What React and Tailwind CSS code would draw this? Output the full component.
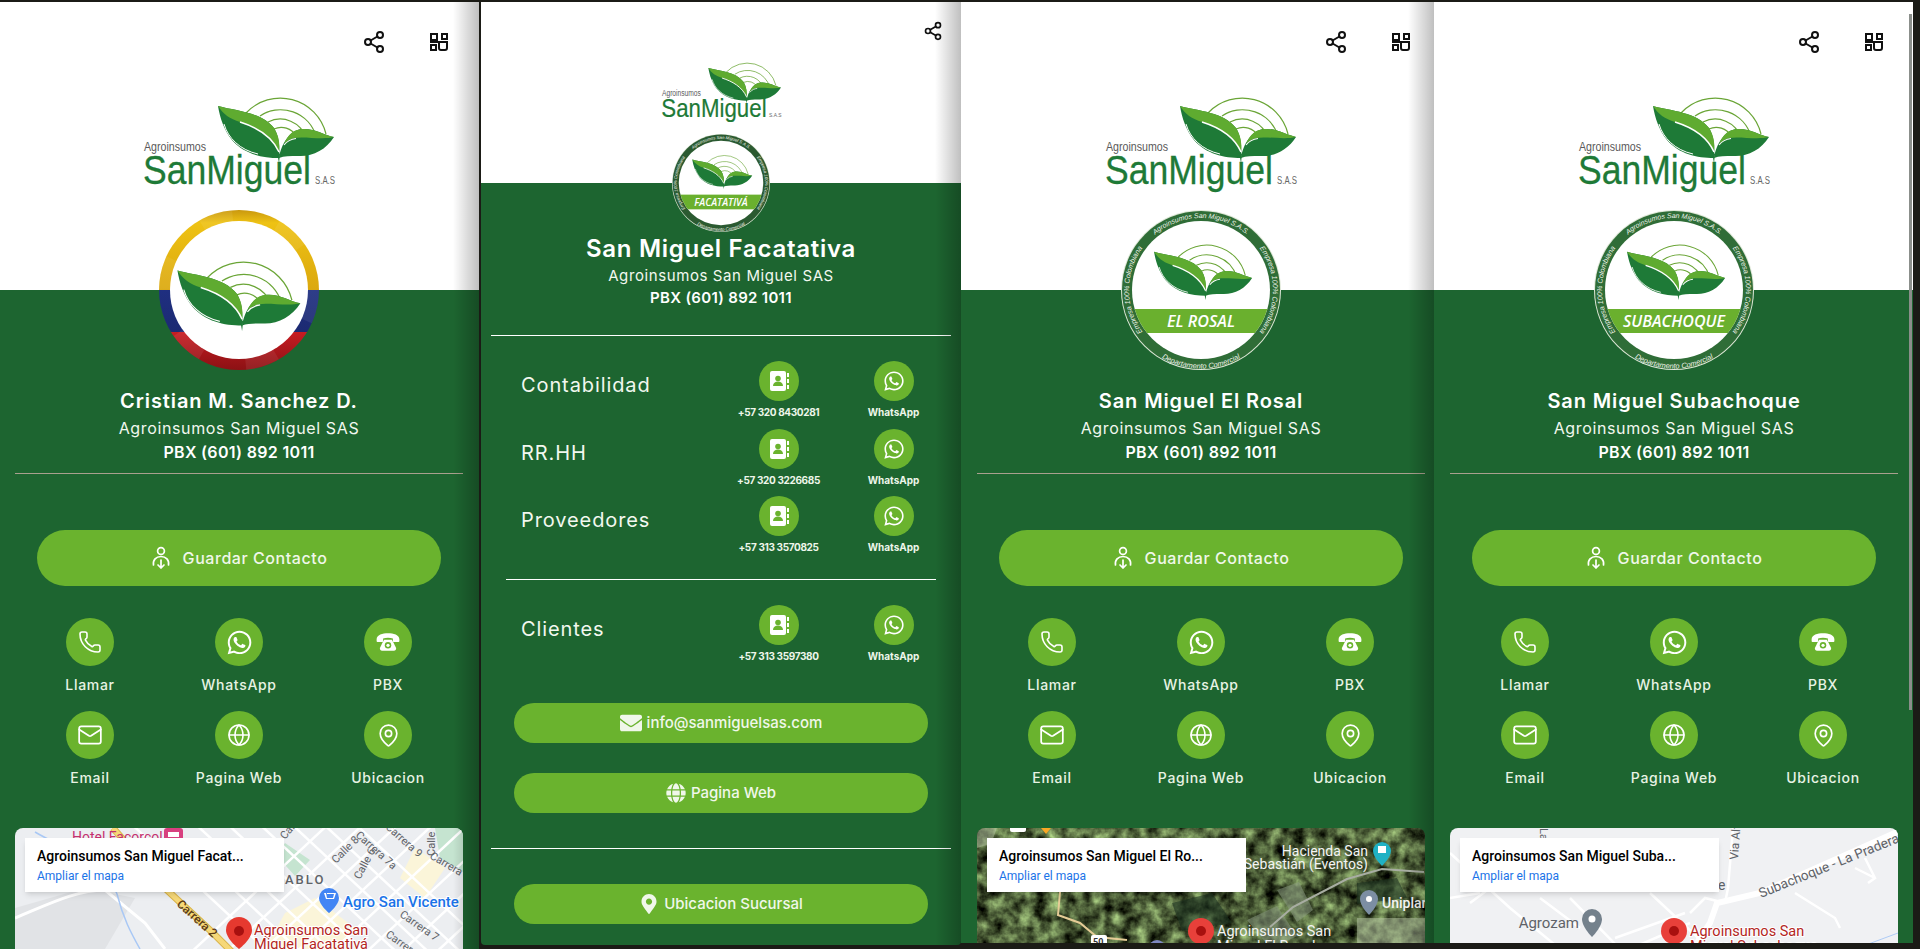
import React from 'react';
import { Share2, Phone, Mail, Globe, MapPin } from 'lucide-react';
import { FaWhatsapp, FaEnvelope, FaGlobe, FaMapMarkerAlt } from 'react-icons/fa';

const QrIcon = () => (
  <svg width="18" height="18" viewBox="0 0 18 18" fill="none" stroke="#111" strokeWidth="2">
    <rect x="1" y="1" width="6" height="6" />
    <rect x="12" y="1" width="5" height="5" />
    <rect x="1" y="12" width="5" height="5" />
    <path d="M0 9h17v6a2 2 0 0 1-2 2h-4a2 2 0 0 1-2-2V9" />
  </svg>
);

const RetroPhone = () => (
  <svg width="26" height="26" viewBox="0 0 24 24">
    <path fill="#fff" d="M1.5 9.5C1.500 5.500 7 4 12 4s10.500 1.500 10.500 5.500v1.500c0 .6-.5 1-1 1h-4c-.6 0-1-.4-1-1V8.700c-2.500-.7-6.500-.7-9 0V11c0 .6-.4 1-1 1h-4c-.5 0-1-.4-1-1z" />
    <path fill="#fff" d="M8.500 10h7l1.500 2.500 2.500 5c.2 1.500-.8 2.500-2 2.500h-11c-1.200 0-2.200-1-2-2.500l2.500-5z" />
    <circle cx="12" cy="15" r="3" fill="#6ab32e" />
    <circle cx="12" cy="15" r="1.500" fill="#fff" />
  </svg>
);

const SaveContactIcon = () => (
  <svg width="20" height="24" viewBox="0 0 20 24" fill="none" stroke="#fff" strokeWidth="1.7" strokeLinecap="round" strokeLinejoin="round">
    <circle cx="10" cy="5" r="3.400" />
    <path d="M2.500 19c-.8-5 2.500-8.500 7.500-8.500s8.300 3.500 7.500 8.500" />
    <path d="M10 14v8M7 19l3 3 3-3" />
  </svg>
);

const ContactBook = () => (
  <svg width="24" height="24" viewBox="0 0 24 24">
    <rect x="3" y="2" width="16" height="20" rx="2" fill="#fff" />
    <circle cx="11" cy="9.500" r="2.800" fill="#6ab32e" />
    <path fill="#6ab32e" d="M6 17c0-3 2.200-4.500 5-4.500s5 1.500 5 4.500z" />
    <path fill="#fff" d="M20 4h2v4h-2zM20 10h2v4h-2zM20 16h2v4h-2z" />
  </svg>
);

// leaf mark in logo coordinates, arcs included
const LeafMark = ({ transform }) => (
  <g transform={transform}>
    <g fill="none" stroke="#6aa536" strokeWidth="1.200">
      <path d="M102 15A47 47 0 0 1 182 36" />
      <path d="M116 18A37 37 0 0 1 172 38" />
      <path d="M124 24A27 27 0 0 1 162 40" />
      <path d="M130 31A17 17 0 0 1 152 38" />
    </g>
    <path fill="#1e7a37" d="M74 8C92 13 118 14 130 30 135 38 136 48 135 60 118 60 100 56 88 42 80 32 76 20 74 8Z" />
    <path fill="#5fab30" d="M74 8C92 13 118 14 130 30 135 38 136 46 135 54 128 38 112 29 96 24 86 21 79 16 74 8Z" />
    <path fill="none" stroke="#fff" strokeWidth="1.500" d="M96 24C112 29 128 38 135 54" />
    <path fill="none" stroke="#fff" strokeWidth="1" d="M80 26C84 40 96 52 114 56" />
    <path fill="#1e7a37" d="M135 60C137 46 146 32 158 31 170 30 180 37 190 39 182 52 168 59 154 58 146 58 140 58 135 60Z" />
    <path fill="#5fab30" d="M140 46C144 36 150 31.500 158 31 170 30 180 37 190 39 178 42 160 38 150 40 146 41 143 43 140 46Z" />
    <path fill="none" stroke="#fff" strokeWidth="1.200" d="M140 47C144 42 148 41 152 40.500" />
    <path fill="#1e7a37" d="M133 54l3 2-1 9z" />
  </g>
);

const Logo = ({ className }) => (
  <svg className={`overflow-visible ${className}`} viewBox="0 0 190 94">
    <LeafMark />
    <text x="0" y="53" fontFamily="Liberation Sans, sans-serif" fontSize="13" fill="#5a5a5a" textLength="62" lengthAdjust="spacingAndGlyphs">Agroinsumos</text>
    <text x="-1" y="86" fontFamily="Liberation Sans, sans-serif" fontSize="40" fill="#1e7a37" stroke="#1e7a37" strokeWidth=".3" textLength="168" lengthAdjust="spacingAndGlyphs">SanMiguel</text>
    <text x="171" y="86" fontFamily="Liberation Sans, sans-serif" fontSize="10" fill="#666" textLength="20" lengthAdjust="spacingAndGlyphs">S.A.S</text>
  </svg>
);

const BranchSeal = ({ id, label, labelWidth, ringColor = '#2f6d37', className }) => (
  <svg className={className} viewBox="0 0 160 160">
    <defs>
      <path id={`${id}-top`} d="M8 80A72 72 0 0 1 152 80" />
      <path id={`${id}-bot`} d="M1.500 80A78.500 78.500 0 0 0 158.500 80" />
      <clipPath id={`${id}-in`}><circle cx="80" cy="80" r="69" /></clipPath>
    </defs>
    <circle cx="80" cy="80" r="80" fill="#dfe8d8" />
    <circle cx="80" cy="80" r="79" fill={ringColor} />
    <circle cx="80" cy="80" r="69" fill="#fff" />
    <g fontFamily="Liberation Sans, sans-serif" fontStyle="italic" fill="#eef3e8">
      <text textAnchor="middle" fontSize="7"><textPath href={`#${id}-top`} startOffset="50%">Agroinsumos San Miguel S.A.S.</textPath></text>
      <g fontSize="7.200">
        <g transform="rotate(-90 80 80)"><text textAnchor="middle"><textPath href={`#${id}-top`} startOffset="50%">Empresa 100% Colombiana</textPath></text></g>
        <g transform="rotate(90 80 80)"><text textAnchor="middle"><textPath href={`#${id}-top`} startOffset="50%">Empresa 100% Colombiana</textPath></text></g>
      </g>
      <text textAnchor="middle" fontSize="7.400"><textPath href={`#${id}-bot`} startOffset="50%">Departamento Comercial</textPath></text>
    </g>
    <LeafMark transform="translate(-29.500 35) scale(.845)" />
    <rect x="0" y="99" width="160" height="24" fill="#6ab02e" clipPath={`url(#${id}-in)`} />
    <text x={80 - labelWidth / 2} y="117" fontFamily="Open Sans, sans-serif" fontStyle="italic" fontWeight="600" fontSize="17" fill="#fff" textLength={labelWidth} lengthAdjust="spacingAndGlyphs">{label}</text>
  </svg>
);

const FlagSeal = ({ className }) => (
  <svg className={className} viewBox="0 0 160 160">
    <defs>
      <linearGradient id="flag" x1="0" y1="0" x2="0" y2="1">
        <stop offset="0" stopColor="#c9980f" />
        <stop offset=".08" stopColor="#eec214" />
        <stop offset=".5" stopColor="#dba80e" />
        <stop offset=".5" stopColor="#1f2f80" />
        <stop offset=".76" stopColor="#1c2a72" />
        <stop offset=".76" stopColor="#c81c22" />
        <stop offset="1" stopColor="#8c1114" />
      </linearGradient>
    </defs>
    <circle cx="80" cy="80" r="80" fill="url(#flag)" />
    <circle cx="80" cy="80" r="74.500" fill="none" stroke="#fff" strokeOpacity=".07" strokeWidth="11" strokeDasharray="32 46" />
    <circle cx="80" cy="80" r="69" fill="#fff" />
    <LeafMark transform="translate(-60 52) scale(1.060)" />
  </svg>
);

const RedPin = ({ big }) => (
  <g>
    {big ? <path fill="#e6392f" d="M224 89a13 13 0 0 1 13 13c0 9-13 19-13 19s-13-10-13-19a13 13 0 0 1 13-13z" /> : <circle cx="224" cy="103" r="13" fill="#e8403a" />}
    <circle cx="224" cy="103" r="5" fill="#a8100f" />
  </g>
);

const MapFacatativa = () => {
  const down = [230, 262, 294, 326, 358, 390, 422, 454];
  const up = [290, 325, 360, 395, 430, 465, 500, 535];
  return (
    <svg className="w-full h-full" viewBox="0 0 448 121" preserveAspectRatio="xMinYMin slice">
      <rect width="448" height="121" fill="#eceef1" />
      <path fill="#e1e3e6" d="M0 80L70 60 120 70 90 121H0z" />
      <path fill="#fbf5d9" d="M250 121L270 85 300 70 340 100 320 121zM400 20L430 40 410 70 385 50z" />
      <path fill="#c5e4d0" d="M420 0H448V44L425 30zM270 15L295 32 280 48 262 28z" />
      <g stroke="#fff" strokeWidth="2.500" fill="none">
        {down.map((x) => <line key={x} x1={x - 120} y1="-10" x2={x + 30} y2="130" />)}
        {up.map((x) => <line key={x} x1={x - 120} y1="130" x2={x + 30} y2="-10" />)}
        <path strokeWidth="3" d="M0 90C30 78 60 62 90 62L130 95 150 121" />
      </g>
      <path fill="none" stroke="#a9c8f5" strokeWidth="1.500" d="M20 4C50 22 90 32 102 66 108 90 116 105 125 121" />
      <path fill="none" stroke="#d9b44a" strokeWidth="7" d="M98 0L152 62 198 105 218 125" />
      <path fill="none" stroke="#f6d878" strokeWidth="5" d="M98 0L152 62 198 105 218 125" />
      <g fontFamily="Roboto, sans-serif" fill="#5f6368" fontSize="11">
        <text transform="translate(321 36) rotate(-45)">Calle 8</text>
        <text transform="translate(340 8) rotate(42)">Carrera 7a</text>
        <text transform="translate(345 52) rotate(-62)">Calle 6</text>
        <text transform="translate(370 0) rotate(42)">Carrera 9</text>
        <text transform="translate(420 28) rotate(-90)">Calle</text>
        <text transform="translate(414 30) rotate(30)">Carrera 7</text>
        <text transform="translate(384 88) rotate(35)">Carrera 7</text>
        <text transform="translate(370 108) rotate(35)">Carrera</text>
        <text transform="translate(270 12) rotate(-50)">Calle 7</text>
        <text x="270" y="56" fontSize="13" fontWeight="500" letterSpacing="2">ABLO</text>
      </g>
      <text transform="translate(161 77) rotate(42)" fontFamily="Roboto, sans-serif" fontSize="12" fontWeight="500" fill="#5b3b16">Carrera 2</text>
      <text x="57" y="14" fontFamily="Roboto, sans-serif" fontSize="14" fill="#c5306f">Hotel Facorcol</text>
      <rect x="149" y="0" width="19" height="14" rx="3" fill="#d8407f" />
      <rect x="153" y="4" width="11" height="5" fill="#fff" />
      <path fill="#4285f4" d="M314 60a10 10 0 0 1 10 10c0 7-10 15-10 15s-10-8-10-15a10 10 0 0 1 10-10z" />
      <path fill="#fff" d="M309 65h2l1 5h6l1-4h-7v-1h9l-2 6h-8z" />
      <text x="328" y="79" fontFamily="Roboto, sans-serif" fontSize="15" fontWeight="500" fill="#1a73e8" stroke="#fff" strokeWidth="2" paintOrder="stroke">Agro San Vicente</text>
      <RedPin big />
      <g fontFamily="Roboto, sans-serif" fontSize="14.500" fill="#b3261e" stroke="#fff" strokeWidth="2" paintOrder="stroke">
        <text x="239" y="107">Agroinsumos San</text>
        <text x="239" y="121">Miguel Facatativá</text>
      </g>
    </svg>
  );
};

const MapRosal = () => (
  <svg className="w-full h-full" viewBox="0 0 448 121" preserveAspectRatio="xMinYMin slice">
    <defs>
      <filter id="sat" x="0" y="0" width="100%" height="100%" colorInterpolationFilters="sRGB">
        <feTurbulence type="fractalNoise" baseFrequency=".07" numOctaves="4" seed="7" />
        <feColorMatrix values="0 1 0 0 -.2  0 1.200 0 0 -.23  0 .8 0 0 -.18  0 0 0 0 1" />
      </filter>
    </defs>
    <rect width="448" height="121" fill="#3f5237" />
    <rect width="448" height="121" filter="url(#sat)" />
    <path fill="#8b9a82" opacity=".55" d="M300 62l22-8 14 28-16 12zM270 92l30-14 20 30-26 13z" />
    <path fill="#1a3020" opacity=".6" d="M195 75l40-10 20 30-50 8zM380 55l40-5 10 20-50 6z" />
    <path fill="#b9c7a7" opacity=".5" d="M0 0h20l-6 16L0 20zM380 90h68v31h-68z" />
    <path fill="none" stroke="#a8ada2" strokeWidth="2" d="M447 44L405 41 370 51 316 79 293 99" />
    <path fill="none" stroke="#e5cc96" strokeWidth="2" d="M83 64L81 87 103 95 120 109 150 112" />
    <path fill="#f9a825" d="M64 0h10l-5 6z" />
    <rect x="33" y="-4" width="16" height="8" rx="2" fill="#fff" />
    <path fill="#1fb1c4" d="M405 14a9 9 0 0 1 9 9c0 6-9 15-9 15s-9-9-9-15a9 9 0 0 1 9-9z" />
    <rect x="401" y="18" width="8" height="7" fill="#fff" />
    <path fill="#7c8ea3" d="M392 62a9 9 0 0 1 9 9c0 7-9 16-9 16s-9-9-9-16a9 9 0 0 1 9-9z" />
    <circle cx="392" cy="71" r="3" fill="#fff" />
    <rect x="114" y="107" width="16" height="14" rx="2" fill="#fff" />
    <text x="116" y="117" fontFamily="Roboto, sans-serif" fontSize="9" fontWeight="700" fill="#333">50</text>
    <circle cx="180" cy="121" r="9" fill="#7e87c0" />
    <g fontFamily="Roboto, sans-serif" fontSize="14" fill="#f4f4f4">
      <text x="391" y="28" textAnchor="end">Hacienda San</text>
      <text x="391" y="41" textAnchor="end">Sebastián (Eventos)</text>
      <text x="405" y="80" fontWeight="500">Uniplan</text>
    </g>
    <RedPin />
    <g fontFamily="Roboto, sans-serif" fontSize="14.500" fill="#f4f4f4">
      <text x="240" y="108">Agroinsumos San</text>
      <text x="240" y="123">Miguel El Rosal</text>
    </g>
  </svg>
);

const MapSubachoque = () => (
  <svg className="w-full h-full" viewBox="0 0 448 121" preserveAspectRatio="xMinYMin slice">
    <rect width="448" height="121" fill="#f0f1f3" />
    <g stroke="#fff" strokeWidth="2.500" fill="none">
      <path d="M0 25L60 80 110 121M40 60L20 75M120 70L170 121M200 65L260 121M90 70L130 100M165 110L235 85M180 121L240 95" />
      <path d="M283 0L278 60 275 75M240 85L255 70 275 75M345 65L385 90 390 100" />
      <path d="M415 30L425 50 418 55M405 40L425 50" />
      <path d="M0 70L30 65" />
    </g>
    <path fill="none" stroke="#fff" strokeWidth="6" strokeLinecap="round" d="M447 4L310 65 267 75 260 95 243 121" />
    <path fill="none" stroke="#aecbf5" strokeWidth="1" d="M405 121L448 105" />
    <g fontFamily="Roboto, sans-serif" fill="#5f6368">
      <text transform="translate(311 70) rotate(-22)" fontSize="13.500">Subachoque - La Pradera</text>
      <text transform="translate(288 32) rotate(-86)" fontSize="12">Via Alta</text>
      <text transform="translate(90 0) rotate(90)" fontSize="11">La P</text>
      <text x="268" y="62" fontSize="14">e</text>
      <text x="129" y="100" fontSize="15" textAnchor="end">Agrozam</text>
    </g>
    <path fill="#74818c" d="M142 81a10 10 0 0 1 10 10c0 8-10 18-10 18s-10-10-10-18a10 10 0 0 1 10-10z" />
    <circle cx="142" cy="91" r="3.500" fill="#fff" />
    <RedPin />
    <g fontFamily="Roboto, sans-serif" fontSize="14.500" fill="#b3261e" stroke="#fff" strokeWidth="2" paintOrder="stroke">
      <text x="240" y="108">Agroinsumos San</text>
      <text x="240" y="123">Miguel Subachoque</text>
    </g>
  </svg>
);

const MapCard = ({ title, children }) => (
  <div className="relative w-[448px] flex-1 min-h-0 rounded-t-lg overflow-hidden mt-[40px]">
    {children}
    <div className="absolute left-[10px] top-[10px] w-[259px] h-[54px] bg-white shadow-md pl-[12px] pt-[8px] font-[Roboto,sans-serif]">
      <p className="text-[14px] leading-[20px] font-medium text-black">{title}</p>
      <p className="text-[12px] leading-[16px] mt-[2px] text-[#1a73e8]">Ampliar el mapa</p>
    </div>
  </div>
);

const ActionIcon = ({ icon, label }) => (
  <div className="flex flex-col items-center">
    <div className="w-[48px] h-[48px] rounded-full bg-[#6ab32e] flex items-center justify-center text-white">{icon}</div>
    <span className="mt-[9px] text-[14px] leading-[20px] font-medium tracking-[.05em] text-[#e8f3e4]">{label}</span>
  </div>
);

const EdgeShade = () => (
  <div className="absolute right-0 top-0 bottom-0 w-[26px] bg-gradient-to-r from-transparent to-black/25 pointer-events-none" />
);

const actions = [
  { label: 'Llamar', icon: <Phone size={24} strokeWidth={1.6} /> },
  { label: 'WhatsApp', icon: <FaWhatsapp size={27} /> },
  { label: 'PBX', icon: <RetroPhone /> },
  { label: 'Email', icon: <Mail size={26} strokeWidth={1.6} /> },
  { label: 'Pagina Web', icon: <Globe size={24} strokeWidth={1.6} /> },
  { label: 'Ubicacion', icon: <MapPin size={25} strokeWidth={1.6} /> },
];

const ContactCard = ({ outerClass, seal, name, title, map, shade = true }) => (
  <section className={`relative shrink-0 overflow-hidden bg-[#1d6530] ${outerClass}`}>
    <div className="w-[480px] h-full flex flex-col items-center">
      <div className="w-full h-[288px] shrink-0 bg-white flex flex-col items-center">
        <div className="w-full flex justify-end items-center gap-[44px] pt-[28px] pr-[31px] text-[#111]">
          <Share2 size={24} strokeWidth={2} />
          <QrIcon />
        </div>
        <Logo className="w-[190px] h-[94px] mt-[44px]" />
      </div>
      <div className="w-[160px] h-[160px] shrink-0 -mt-[80px] relative">{seal}</div>
      <h2 className="mt-[17px] text-[20px] leading-[28px] font-semibold tracking-[.045em] text-white">{name}</h2>
      <p className="mt-px text-[16px] leading-[24px] tracking-[.04em] text-[#f2f8ef]">Agroinsumos San Miguel SAS</p>
      <p className="text-[16px] leading-[24px] font-semibold tracking-[.02em] text-white">PBX (601) 892 1011</p>
      <div className="w-[448px] h-px bg-[#a9a08e] mt-[9px] shrink-0" />
      <button className="mt-[56px] w-[404px] h-[56px] shrink-0 rounded-full bg-[#6ab32e] flex items-center justify-center gap-[12px] text-[16px] font-medium tracking-[.035em] text-[#f0f7ea]">
        <SaveContactIcon />
        Guardar Contacto
      </button>
      <div className="mt-[32px] w-[447px] grid grid-cols-3 gap-y-[16px] shrink-0">
        {actions.map((a) => <ActionIcon key={a.label} icon={a.icon} label={a.label} />)}
      </div>
      <MapCard title={title}>{map}</MapCard>
    </div>
    {shade && <EdgeShade />}
  </section>
);

const departments = [
  { name: 'Contabilidad', phone: '+57 320 8430281' },
  { name: 'RR.HH', phone: '+57 320 3226685' },
  { name: 'Proveedores', phone: '+57 313 3570825' },
];

const SmallAction = ({ icon, label, tight }) => (
  <div className="w-[115px] flex flex-col items-center">
    <div className="w-[40px] h-[40px] rounded-full bg-[#6ab32e] flex items-center justify-center text-white">{icon}</div>
    <span className={`mt-[4px] text-[10px] leading-[14px] font-bold whitespace-nowrap text-[#eef6ea] ${tight ? 'tracking-[-.035em]' : ''}`}>{label}</span>
  </div>
);

const DeptRow = ({ name, phone }) => (
  <div className="w-full flex items-start pl-[40px] pr-[10px] h-[58px]">
    <span className="flex-1 mt-[10px] text-[20px] leading-[28px] tracking-[.045em] text-[#f2f8ef]">{name}</span>
    <SmallAction icon={<ContactBook />} label={phone} tight />
    <SmallAction icon={<FaWhatsapp size={22} />} label="WhatsApp" />
  </div>
);

const PillLink = ({ icon, label, className }) => (
  <a className={`w-[414px] h-[40px] shrink-0 rounded-full bg-[#6ab32e] flex items-center justify-center gap-[5px] text-[15px] font-medium text-[#f0f7ea] ${className}`}>
    {icon}
    {label}
  </a>
);

const BranchDirectory = () => (
  <section className="relative w-[480px] h-[943px] ml-[2px] shrink-0 overflow-hidden rounded-b-sm bg-[#1d6530] flex flex-col items-center">
    <div className="w-full h-[181px] shrink-0 bg-white flex flex-col items-center">
      <div className="w-full flex justify-end pt-[19px] pr-[18px] text-[#111]">
        <Share2 size={20} strokeWidth={2} />
      </div>
      <Logo className="w-[119px] h-[59px] mt-[22px]" />
    </div>
    <div className="w-[98px] h-[98px] shrink-0 -mt-[49px] relative">
      <BranchSeal id="fac" label="FACATATIVÁ" labelWidth={87} ringColor="#2b5a31" />
    </div>
    <h2 className="mt-[1px] text-[24px] leading-[32px] font-semibold tracking-[.03em] text-white">San Miguel Facatativa</h2>
    <p className="-mt-px text-[15px] leading-[24px] tracking-[.04em] text-[#f2f8ef]">Agroinsumos San Miguel SAS</p>
    <p className="-mt-[2px] text-[15px] leading-[24px] font-semibold tracking-[.02em] text-white">PBX (601) 892 1011</p>
    <div className="w-[460px] h-px bg-white mt-[25px] shrink-0" />
    <div className="mt-[25px] w-full flex flex-col gap-y-[9.5px] shrink-0">
      {departments.map((d) => <DeptRow key={d.name} name={d.name} phone={d.phone} />)}
    </div>
    <div className="w-[430px] h-px bg-white mt-[25px] shrink-0" />
    <div className="mt-[25px] w-full shrink-0">
      <DeptRow name="Clientes" phone="+57 313 3597380" />
    </div>
    <PillLink className="mt-[40px]" icon={<FaEnvelope size={22} />} label="info@sanmiguelsas.com" />
    <PillLink className="mt-[30px]" icon={<FaGlobe size={20} />} label="Pagina Web" />
    <div className="w-[460px] h-px bg-white mt-[35px] shrink-0" />
    <PillLink className="mt-[35px]" icon={<FaMapMarkerAlt size={20} />} label="Ubicacion Sucursal" />
    <EdgeShade />
  </section>
);

const App = () => (
  <div className="relative w-[1920px] h-[949px] overflow-hidden bg-[#1b1b16] pt-[2px] flex items-start font-[Inter,sans-serif]">
    <ContactCard
      outerClass="w-[480px] h-[947px] -ml-px"
      seal={<FlagSeal />}
      name="Cristian M. Sanchez D."
      title="Agroinsumos San Miguel Facat..."
      map={<MapFacatativa />}
    />
    <BranchDirectory />
    <ContactCard
      outerClass="w-[473px] h-[941px]"
      seal={<BranchSeal id="ros" label="EL ROSAL" labelWidth={68} />}
      name="San Miguel El Rosal"
      title="Agroinsumos San Miguel El Ro..."
      map={<MapRosal />}
    />
    <ContactCard
      outerClass="w-[479px] h-[941px]"
      seal={<BranchSeal id="sub" label="SUBACHOQUE" labelWidth={102} />}
      name="San Miguel Subachoque"
      title="Agroinsumos San Miguel Suba..."
      map={<MapSubachoque />}
      shade={false}
    />
    {/* scrollbar of the last window */}
    <div className="absolute left-[1909px] top-[14px] w-[3px] h-[696px] bg-[#8b8f8b]" />
  </div>
);

export default App;
